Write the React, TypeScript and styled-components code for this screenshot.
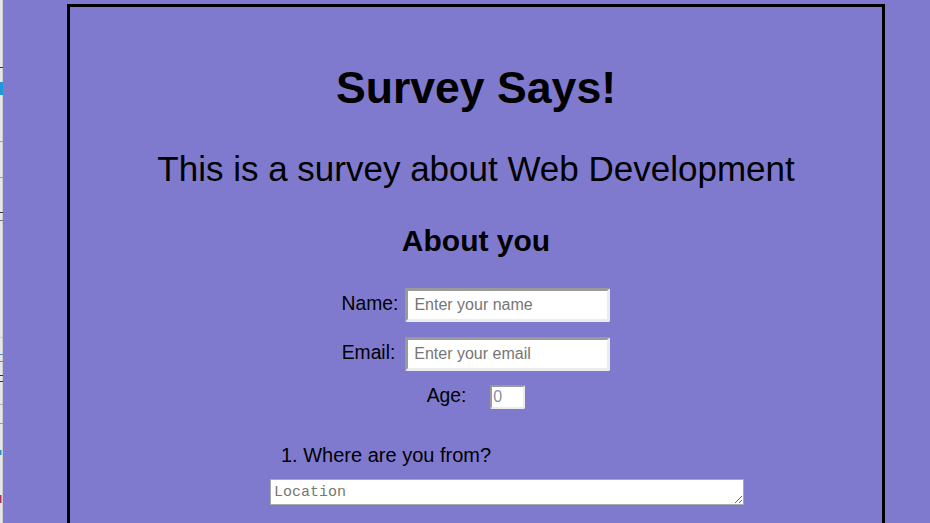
import React from "react";
import styled, { createGlobalStyle } from "styled-components";

const GlobalStyle = createGlobalStyle`
  html, body {
    margin: 0;
    padding: 0;
    background: #7f7ace;
    font-family: "Liberation Sans", Arial, sans-serif;
    color: #000;
    overflow: hidden;
  }
  * { box-sizing: border-box; }
`;

const Page = styled.div`
  display: flex;
  min-height: 523px;
  width: 930px;
`;

const EdgeStrip = styled.svg`
  flex: 0 0 3px;
  width: 3px;
  height: 523px;
  display: block;
`;

const Main = styled.main`
  flex: 1;
  padding-top: 4px;
`;

const Card = styled.section`
  margin-left: 64px;
  width: 818px;
  min-height: 620px;
  border: 3px solid #000;
  display: flex;
  flex-direction: column;
`;

const Title = styled.h1`
  margin: 55px 0 0;
  font-size: 44.6px;
  line-height: 52px;
  font-weight: 700;
  text-align: center;
`;

const Subtitle = styled.p`
  margin: 34px 0 0;
  font-size: 35px;
  line-height: 1.2;
  font-weight: 400;
  text-align: center;
`;

const SectionHeading = styled.h2`
  margin: 33px 0 0;
  font-size: 30px;
  line-height: 36px;
  font-weight: 700;
  text-align: center;
`;

const FieldRow = styled.div<{ $gap: number; $top: number }>`
  display: flex;
  justify-content: center;
  align-items: baseline;
  gap: ${(p) => p.$gap}px;
  margin-top: ${(p) => p.$top}px;
`;

const Label = styled.label`
  font-size: 19.3px;
  line-height: normal;
`;

const TextInput = styled.input`
  width: 205px;
  height: 34px;
  padding: 0 6px;
  font-family: "Liberation Sans", Arial, sans-serif;
  font-size: 16px;
  background: #fff;
  border-style: solid;
  border-width: 3px;
  border-color: #9a9a9a #ececec #ececec #9a9a9a;
  border-radius: 2px;
  outline: none;
  &::placeholder {
    color: #767676;
  }
`;

const AgeInput = styled.input`
  width: 35px;
  height: 24px;
  padding: 1px 1px;
  font-family: "Liberation Sans", Arial, sans-serif;
  font-size: 16px;
  background: #fff;
  border-style: solid;
  border-width: 2px;
  border-color: #9a9a9a #ececec #ececec #9a9a9a;
  border-radius: 2px;
  outline: none;
  &::placeholder {
    color: #8a8fa8;
  }
`;

const Question = styled.div`
  margin: 35px 0 0 200px;
  width: 474px;
  display: flex;
  flex-direction: column;
`;

const QuestionText = styled.p`
  margin: 0;
  padding-left: 11px;
  font-size: 20px;
  line-height: normal;
`;

const Answer = styled.textarea`
  margin-top: 12px;
  width: 474px;
  height: 26px;
  padding: 4px 3px 2px;
  font-family: "Liberation Mono", "Courier New", monospace;
  font-size: 15px;
  line-height: normal;
  background: #fff;
  border: 1px solid #a9a9a9;
  border-radius: 0;
  outline: none;
  display: block;
  &::placeholder {
    color: #767676;
  }
`;

export default function App() {
  return (
    <>
      <GlobalStyle />
      <Page>
        <EdgeStrip viewBox="0 0 3 523" preserveAspectRatio="none">
          <rect x="0" y="0" width="3" height="523" fill="#e6e6e6" />
          <rect x="2.4" y="0" width="0.6" height="523" fill="#bdbdbd" />
          <rect x="0" y="67" width="3" height="1" fill="#3a3a3a" />
          <rect x="0" y="82" width="3" height="13" fill="#1f9ad6" />
          <rect x="0" y="141" width="3" height="1" fill="#a0a0a0" />
          <rect x="0" y="177" width="3" height="1" fill="#a0a0a0" />
          <rect x="0" y="212" width="3" height="1" fill="#333" />
          <rect x="0" y="220" width="3" height="1" fill="#777" />
          <rect x="0" y="337" width="3" height="1" fill="#c8c8c8" />
          <rect x="0" y="354" width="3" height="1" fill="#4c90c8" />
          <rect x="0" y="361" width="3" height="1" fill="#4c90c8" />
          <rect x="0" y="375" width="3" height="1" fill="#333" />
          <rect x="0" y="381" width="3" height="1" fill="#333" />
          <rect x="0" y="404" width="3" height="1" fill="#b0b0b0" />
          <rect x="0" y="423" width="3" height="1" fill="#999" />
          <rect x="0" y="450" width="1.5" height="5" fill="#2c8fc4" />
          <rect x="0" y="495" width="1.5" height="8" fill="#b0305a" />
        </EdgeStrip>
        <Main>
          <Card>
            <Title>Survey Says!</Title>
            <Subtitle>This is a survey about Web Development</Subtitle>
            <SectionHeading>About you</SectionHeading>
            <FieldRow $gap={7} $top={29}>
              <Label htmlFor="name">Name:</Label>
              <TextInput id="name" type="text" placeholder="Enter your name" />
            </FieldRow>
            <FieldRow $gap={10} $top={15}>
              <Label htmlFor="email">Email:</Label>
              <TextInput id="email" type="email" placeholder="Enter your email" />
            </FieldRow>
            <FieldRow $gap={24} $top={14}>
              <Label htmlFor="age">Age:</Label>
              <AgeInput id="age" type="text" placeholder="0" />
            </FieldRow>
            <Question>
              <QuestionText>1. Where are you from?</QuestionText>
              <Answer rows={1} placeholder="Location" />
            </Question>
          </Card>
        </Main>
      </Page>
    </>
  );
}
